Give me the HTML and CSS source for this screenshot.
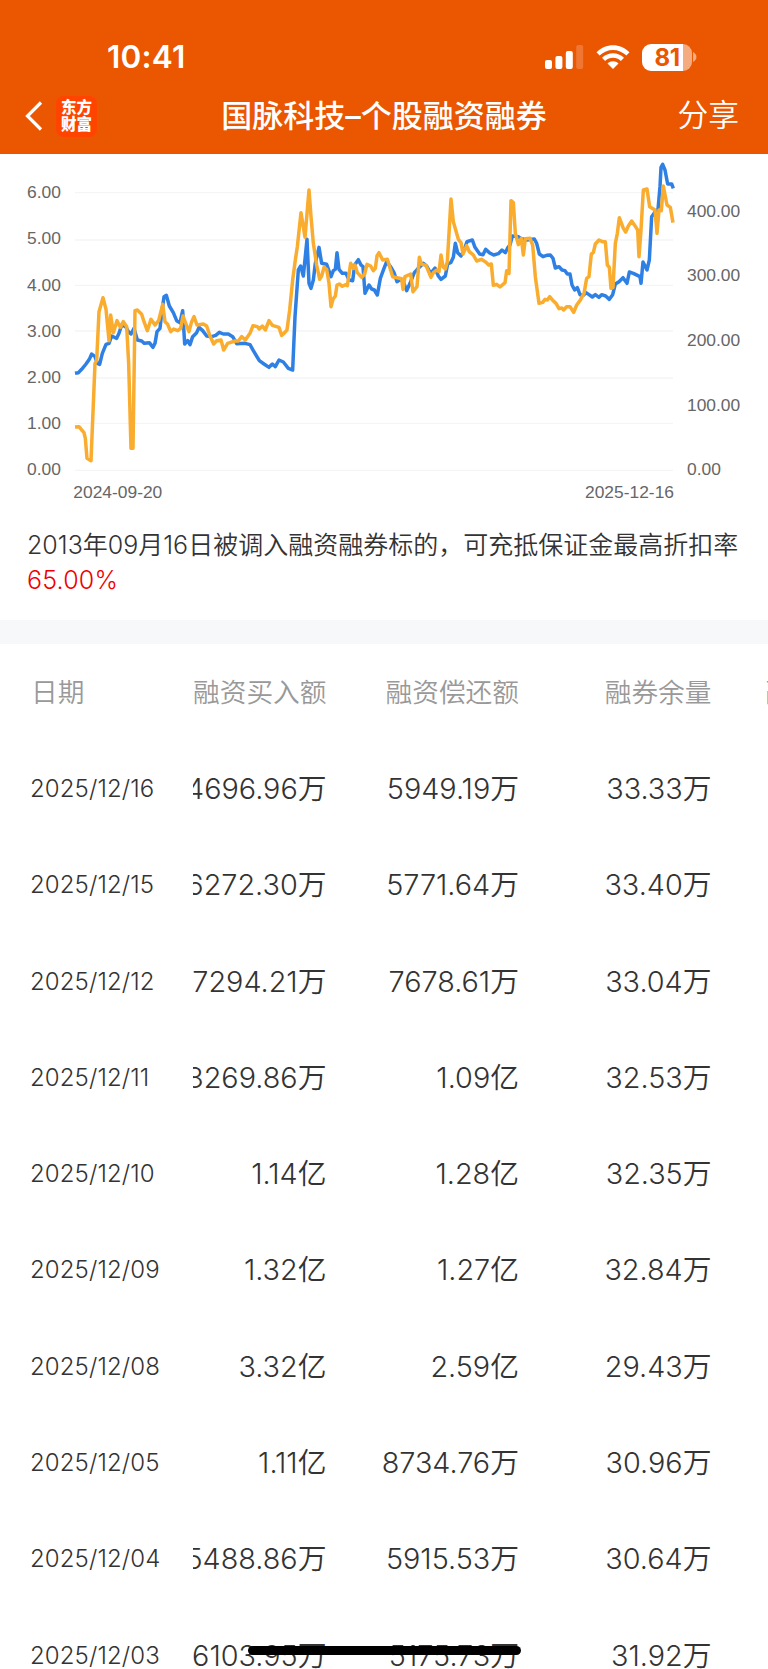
FILE: index.html
```html
<!DOCTYPE html>
<html lang="zh-CN">
<head>
  <meta charset="utf-8" />
  <meta name="viewport" content="width=device-width, initial-scale=1" />
  <title>国脉科技–个股融资融券</title>
  <link rel="stylesheet" href="styles.css">
</head>
<body>
  <header class="header">
    <div class="status-bar">
      <span class="time">10:41</span>
      <div class="status-icons">
        <svg class="signal" width="39" height="26" viewBox="0 0 39 26">
          <rect x="0" y="16" width="7" height="9" rx="2" />
          <rect x="10.4" y="12" width="7" height="13" rx="2" />
          <rect x="20.8" y="7" width="7" height="18" rx="2" />
          <rect x="31.2" y="1" width="7" height="24" rx="2" opacity="0.2" />
        </svg>
        <svg class="wifi" width="34" height="26" viewBox="0 0 34 26">
          <path d="M0.5 8.3C9.6-1.1 24.4-1.1 33.5 8.3L30.4 11.5C23 4 11 4 3.6 11.5Z" />
          <path d="M6 13.8C12.1 7.6 21.9 7.6 28 13.8L24.9 17C20.5 12.6 13.5 12.6 9.1 17Z" />
          <path d="M11.5 19.4C14.5 16.4 19.5 16.4 22.5 19.4L17 25Z" />
        </svg>
        <div class="battery">
          <div class="battery-body">81</div>
          <svg width="4" height="10" viewBox="0 0 4 10"><path d="M0 0C4.600 2.500 4.600 7.500 0 10Z" /></svg>
        </div>
      </div>
    </div>
    <div class="nav-bar">
      <div class="nav-left">
        <svg class="back" width="18" height="32" viewBox="0 0 18 32"><path d="M16 2.500L2.500 16L16 29.500" /></svg>
        <div class="logo"><span>东方</span><span>财富</span></div>
      </div>
      <h1>国脉科技–个股融资融券</h1>
      <a class="share">分享</a>
    </div>
  </header>

  <section class="chart">
    <svg viewBox="0 12 2304 1068" width="768" height="356">
      <g class="grid">
        <path d="M225 128H2019M225 270H2019M225 406H2019M225 543H2019M225 684H2019M225 820H2019M225 961H2019" />
      </g>
      <g class="axis">
        <text x="81" y="145">6.00</text>
        <text x="81" y="283">5.00</text>
        <text x="81" y="422">4.00</text>
        <text x="81" y="560">3.00</text>
        <text x="81" y="699">2.00</text>
        <text x="81" y="837">1.00</text>
        <text x="81" y="976">0.00</text>
        <text x="2061" y="201">400.00</text>
        <text x="2061" y="394">300.00</text>
        <text x="2061" y="588">200.00</text>
        <text x="2061" y="782">100.00</text>
        <text x="2061" y="976">0.00</text>
        <text x="220" y="1043">2024-09-20</text>
        <text x="2022" y="1043" text-anchor="end">2025-12-16</text>
      </g>
      <polyline class="line blue" points="225,670 235,668 245,658 258,642 268,628 275,612 285,620 292,640 299,643 307,610 318,583 327,580 335,558 350,565 357,550 365,525 377,530 385,545 393,552 402,535 412,570 425,573 433,580 448,578 459,592 465,580 471,545 480,535 485,490 492,440 499,436 508,468 520,488 530,512 540,518 548,482 554,582 563,572 570,584 578,560 590,548 597,532 608,542 620,558 635,560 647,556 658,547 670,552 685,552 698,560 710,581
        735,580 750,584 760,602 778,632 792,642 807,652 817,642 826,650 837,630 850,636 865,655 878,660 885,500 895,360 902,348 910,378 921,268 927,400 933,415 940,390 946,340 957,292 965,340 980,343 993,380 1000,362 1006,358 1011,308 1017,358 1027,370 1038,370 1047,390 1058,392 1064,345 1075,329 1083,345 1089,350 1095,430 1107,405 1115,417 1123,420 1132,435 1141,385 1152,355 1160,335
        1173,352 1182,368 1191,395 1202,388 1212,400 1220,422 1230,400 1243,368 1252,358 1270,340 1280,348 1292,370 1305,354 1315,378 1323,388 1336,378 1343,342 1353,337 1360,322 1366,280 1373,308 1383,318 1392,302 1401,275 1417,270 1425,292 1439,312 1449,314 1457,298 1468,308 1481,315 1495,311 1506,300 1516,308 1524,292 1530,285 1537,258 1555,260 1562,265 1580,270 1603,267 1610,280 1618,312
        1629,320 1640,316 1651,315 1659,325 1666,354 1677,350 1686,360 1695,362 1702,372 1710,372 1716,405 1724,420 1732,413 1740,434 1750,436 1758,428 1767,434 1777,441 1786,434 1797,442 1805,434 1817,438 1828,448 1838,434 1846,402 1857,395 1869,383 1881,400 1888,366 1900,370 1920,380 1923,400 1929,336 1941,360 1948,330 1955,200 1965,186 1974,178 1980,110 1983,52 1988,43 1995,60 2003,102 2015,102 2020,115" />
      <polyline class="line orange" points="225,831 237,830 245,840 252,848 256,865 261,925 273,932 285,640 290,632 297,485 309,443 318,478 327,572 332,495 340,548 351,512 361,532 370,515 380,530 386,640 393,895 399,895 405,482 412,480 425,493 432,515 442,542 453,508 465,525 476,512 488,463 495,515 503,523 512,545 521,537 533,542 542,535 549,498 558,522 567,545 575,515 582,500 591,525 610,522 620,528 630,558 641,582 650,572 663,570 671,600 683,580 705,573
        715,573 725,560 736,570 750,550 759,527 772,530 778,537 787,528 796,540 807,512 817,526 837,532 845,556 854,548 861,540 869,480 878,390 886,330 892,290 903,188 915,262 927,120 933,200 940,280 950,345 959,388 965,378 972,352 980,358 987,400 993,470 999,448 1006,438 1011,405 1018,402 1027,409 1036,404 1042,407 1052,340 1060,355 1065,345 1072,368 1085,382 1094,372 1101,343 1112,348 1120,362 1126,355 1131,318 1137,308 1148,330
        1162,328 1178,380 1205,386 1209,418 1215,380 1232,372 1239,425 1251,410 1258,322 1264,342 1278,346 1293,382 1300,368 1310,360 1317,365 1323,315 1329,350 1336,357 1342,335 1347,250 1353,147 1360,215 1375,268 1383,278 1389,312 1400,287 1408,305 1420,315 1430,333 1444,328 1458,337 1466,345 1474,342 1480,406 1490,403 1500,411 1515,398 1520,362 1527,370 1530,260 1533,152 1540,158 1546,250 1555,284 1564,265 1570,315 1576,266 1590,265 1598,285 1606,380 1617,460
        1628,457 1635,448 1642,450 1649,440 1659,452 1668,460 1677,476 1685,474 1691,480 1700,470 1710,470 1721,487 1730,465 1740,452 1752,430 1760,385 1767,380 1774,312 1780,308 1786,282 1797,270 1807,275 1816,275 1822,345 1828,352 1833,415 1839,412 1846,280 1852,250 1858,203 1870,235 1877,246 1885,228 1895,213 1908,232 1913,240 1917,320 1923,240 1930,120 1941,117 1949,170 1965,180 1971,250 1977,180 1984,182 1990,108 2001,165 2011,172 2019,218" />
    </svg>
    <p class="note">2013年09月16日被调入融资融券标的，可充抵保证金最高折扣率<br><em>65.00%</em></p>
  </section>

  <section class="detail">
    <div class="dates">
      <div class="th">日期</div>
      <div>2025/12/16</div>
      <div>2025/12/15</div>
      <div>2025/12/12</div>
      <div>2025/12/11</div>
      <div>2025/12/10</div>
      <div>2025/12/09</div>
      <div>2025/12/08</div>
      <div>2025/12/05</div>
      <div>2025/12/04</div>
      <div>2025/12/03</div>
    </div>
    <div class="scroller">
      <div class="track">
        <div class="row th"><span>融资买入额</span><span>融资偿还额</span><span>融券余量</span><span class="next">融券卖出量</span></div>
        <div class="row"><span>4696.96万</span><span>5949.19万</span><span>33.33万</span></div>
        <div class="row"><span>6272.30万</span><span>5771.64万</span><span>33.40万</span></div>
        <div class="row"><span>7294.21万</span><span>7678.61万</span><span>33.04万</span></div>
        <div class="row"><span>8269.86万</span><span>1.09亿</span><span>32.53万</span></div>
        <div class="row"><span>1.14亿</span><span>1.28亿</span><span>32.35万</span></div>
        <div class="row"><span>1.32亿</span><span>1.27亿</span><span>32.84万</span></div>
        <div class="row"><span>3.32亿</span><span>2.59亿</span><span>29.43万</span></div>
        <div class="row"><span>1.11亿</span><span>8734.76万</span><span>30.96万</span></div>
        <div class="row"><span>5488.86万</span><span>5915.53万</span><span>30.64万</span></div>
        <div class="row"><span>6103.95万</span><span>5175.73万</span><span>31.92万</span></div>
      </div>
    </div>
  </section>
  <div class="home-indicator"></div>
</body>
</html>
```
FILE: styles.css
```css
* {
  box-sizing: border-box;
}
body {
  margin: 0;
  height: 1669px;
  overflow: hidden;
  position: relative;
  background: #fff;
  color: #333;
  font-family: Inter, "Noto Sans CJK SC", sans-serif;
}
.header {
  height: 154px;
  background: #eb5600;
  color: #fff;
}
.status-bar {
  height: 78px;
  padding: 36px 71px 0 107px;
  display: flex;
  justify-content: space-between;
  align-items: flex-start;
}
.time {
  font-size: 31.5px;
  font-weight: 600;
  line-height: 42px;
  letter-spacing: 0.2px;
}
.status-icons {
  display: flex;
  align-items: center;
  height: 42px;
}
.status-icons svg {
  fill: #fff;
}
.signal {
  margin-right: 12px;
}
.wifi {
  margin-right: 12px;
}
.battery {
  display: flex;
  align-items: center;
  gap: 1px;
}
.battery svg {
  opacity: 0.5;
}
.battery-body {
  width: 50px;
  height: 27px;
  border-radius: 9px;
  background: linear-gradient(to right, #fff 41px, #f5ab80 41px);
  color: #eb5600;
  font-size: 24px;
  font-weight: 700;
  line-height: 27px;
  text-align: center;
  letter-spacing: -0.5px;
}
.nav-bar {
  height: 76px;
  padding: 0 29px 0 25px;
  display: grid;
  grid-template-columns: 190px 1fr 186px;
  align-items: center;
}
.nav-left {
  display: flex;
  align-items: center;
  gap: 13px;
}
.back {
  fill: none;
  stroke: #fff;
  stroke-width: 3.2;
}
.logo {
  width: 41px;
  height: 41px;
  border-radius: 8px;
  background: #ff4400;
  display: flex;
  flex-direction: column;
  justify-content: center;
  align-items: center;
  font-size: 15.5px;
  font-weight: 900;
  line-height: 17.5px;
}
h1 {
  margin: 0;
  font-size: 31px;
  font-weight: 500;
  line-height: 44px;
  text-align: center;
  white-space: nowrap;
}
.share {
  justify-self: end;
  font-size: 30.8px;
  font-weight: 350;
  line-height: 44px;
  margin-top: -2px;
}
.chart {
  height: 466px;
}
.chart svg {
  display: block;
}
.grid path {
  stroke: #f5f5f5;
  stroke-width: 4;
}
.axis text {
  font-family: "Liberation Sans", sans-serif;
  font-size: 52.2px;
  fill: #666;
}
.line {
  fill: none;
  stroke-width: 10.5;
  stroke-linejoin: round;
}
.blue {
  stroke: #2f80e4;
}
.orange {
  stroke: #faac2e;
}
.note {
  margin: 18px 0 0 27px;
  font-size: 25px;
  font-weight: 350;
  line-height: 34.8px;
  white-space: nowrap;
}
.note em {
  font-style: normal;
  letter-spacing: 0.2px;
  color: #f00000;
}
.detail {
  border-top: 24px solid #f7f8fa;
  display: flex;
}
.dates {
  width: 192.5px;
  flex: none;
  padding-left: 30px;
  font-size: 24px;
  font-weight: 350;
  letter-spacing: 0.1px;
}
.dates div,
.row {
  height: 96.3px;
  line-height: 96.3px;
}
.scroller {
  flex: 1;
  overflow: hidden;
}
/* list is scrolled sideways a little */
.track {
  width: 900px;
  margin-left: -58.5px;
}
.row {
  display: grid;
  grid-template-columns: repeat(4, 192.5px);
  font-size: 28.8px;
  font-weight: 350;
  text-align: right;
}
.dates .th,
.row.th {
  height: 97px;
  font-size: 26.7px;
  letter-spacing: 0;
  color: #999;
}
.dates .th {
  padding-left: 1px;
}
.row .next {
  padding-left: 54px;
  text-align: left;
  white-space: nowrap;
}
.home-indicator {
  position: absolute;
  left: 248px;
  top: 1646px;
  width: 273px;
  height: 9px;
  border-radius: 5px;
  background: #000;
}
```
